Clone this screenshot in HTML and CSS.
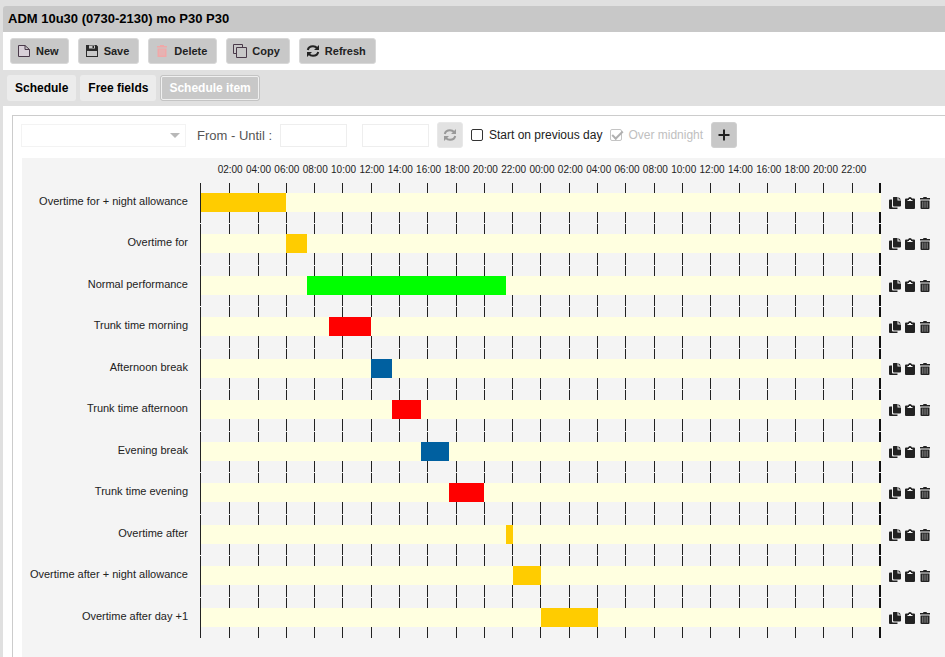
FILE: index.html
```html
<!DOCTYPE html>
<html lang="en">
<head>
    <meta charset="UTF-8">
    <meta name="viewport" content="width=device-width, initial-scale=1.0">
    <title>ADM 10u30 (0730-2130) mo P30 P30</title>
    <link rel="stylesheet" href="styles.css">
</head>
<body>
    <svg class="sprite" aria-hidden="true">
        <symbol id="icon-files" viewBox="0 0 12 12">
            <path fill="currentColor" d="M4.500 0H8.500V3.500H12V8.500Q12 9.500 11 9.500H5Q4 9.500 4 8.500V.5Q4 0 4.500 0ZM9.500 0L12 2.500H9.500ZM1 2.500H3V9.500Q3 10.500 4 10.500H8.500V11.500Q8.500 12 8 12H1Q0 12 0 11V3.500Q0 2.500 1 2.500Z"/>
        </symbol>
        <symbol id="icon-clipboard" viewBox="0 0 10 12">
            <path fill="currentColor" fill-rule="evenodd" d="M1 1.500H3Q3.500 0 5 0Q6.500 0 7 1.500H9Q10 1.500 10 2.500V11Q10 12 9 12H1Q0 12 0 11V2.500Q0 1.500 1 1.500ZM2.500 3V4H7.500V3H6V2H4V3Z"/>
        </symbol>
        <symbol id="icon-trash" viewBox="0 0 10 12">
            <path fill="currentColor" d="M0 1H3L3.500 0H6.500L7 1H10V2.500H0ZM.5 3.500H9.500V11Q9.500 12 8.500 12H1.500Q.5 12 .5 11Z"/>
            <path fill="none" stroke="#aaa" stroke-width=".8" d="M2.800 4.500V10.800M5 4.500V10.800M7.200 4.500V10.800"/>
        </symbol>
        <symbol id="icon-refresh" viewBox="0 0 14 14">
            <path fill="none" stroke="currentColor" stroke-width="2" d="M1.800 6Q2.500 2.200 7 2.200Q9.500 2.200 11.300 4.200M12.200 8Q11.500 11.800 7 11.800Q4.500 11.800 2.700 9.800"/>
            <path fill="currentColor" d="M13 1V6H8ZM1 13V8H6Z"/>
        </symbol>
    </svg>

    <div class="window">
        <h1 class="title">ADM 10u30 (0730-2130) mo P30 P30</h1>

        <div class="toolbar">
            <button type="button" class="btn">
                <svg class="icon" viewBox="0 0 14 14"><path fill="#d8d0d8" stroke="#4a3a4a" d="M1.500 1.500H8L12.500 5.500V12.500H1.500ZM8 1.500V5.500H12.500"/></svg>
                New
            </button>
            <button type="button" class="btn">
                <svg class="icon" viewBox="0 0 14 14"><path fill="#2a2a2a" fill-rule="evenodd" d="M1 1H11.500L13 2.500V13H1ZM2 7V12H12V7ZM4 1.500V4.500H10V1.500ZM7.500 2H9V4H7.500Z"/></svg>
                Save
            </button>
            <button type="button" class="btn">
                <svg class="icon" viewBox="0 0 14 14"><path fill="#f0a8a8" d="M2.500 4.500H11.500V13H2.500ZM2 2H5V1H9V2H12V3.500H2Z"/><path stroke="#dcbcbc" d="M5 5.500V11.500M7 5.500V11.500M9 5.500V11.500"/></svg>
                Delete
            </button>
            <button type="button" class="btn">
                <svg class="icon" viewBox="0 0 14 14"><path fill="none" stroke="#4a3a4a" d="M3.500 9.500H.5V.5H9.500V3.500M3.500 3.500H13.500V13.500H3.500Z"/></svg>
                Copy
            </button>
            <button type="button" class="btn">
                <svg class="icon"><use href="#icon-refresh"/></svg>
                Refresh
            </button>
        </div>

        <nav class="tabs">
            <a class="tab" href="#schedule">Schedule</a>
            <a class="tab" href="#free-fields">Free fields</a>
            <a class="tab active" href="#schedule-item">Schedule item</a>
        </nav>

        <main class="content">
            <div class="panel">
                <form class="filters">
                    <div class="combo">
                        <select aria-label="Type" disabled><option></option></select>
                        <svg class="combo-arrow" viewBox="0 0 10 5"><path fill="#b8b8b8" d="M0 0H10L5 5Z"/></svg>
                    </div>
                    <label class="range-label" for="from">From - Until :</label>
                    <input class="time" type="text" id="from" disabled>
                    <input class="time" type="text" id="until" aria-label="Until" disabled>
                    <button type="button" class="square-btn" aria-label="Reload" disabled><svg class="icon"><use href="#icon-refresh"/></svg></button>
                    <label class="check"><input type="checkbox">Start on previous day</label>
                    <label class="check check-disabled"><input type="checkbox" checked disabled>Over midnight</label>
                    <button type="button" class="square-btn" aria-label="Add"><svg class="icon" viewBox="0 0 14 14"><path stroke="#222" stroke-width="2" d="M7 1.500V12.500M1.500 7H12.500"/></svg></button>
                </form>

                <div class="chart">
                    <div class="hours" id="hours"></div>
                    <div class="rows" id="rows"></div>
                </div>
            </div>
        </main>
    </div>

    <script src="schedule.js"></script>
</body>
</html>
```
FILE: styles.css
```css
* {
    margin: 0;
    padding: 0;
    box-sizing: border-box;
}

body {
    font-family: 'Liberation Sans', Arial, sans-serif;
    font-size: 12px;
    background: #e0e0e0;
    color: #222;
    height: 100vh;
    overflow: hidden;
}

button,
input,
select {
    font: inherit;
    color: inherit;
}

.sprite {
    display: none;
}

.icon {
    width: 14px;
    height: 14px;
    flex-shrink: 0;
}

.window {
    height: 100%;
    padding: 6px 0 0 3px;
    display: flex;
    flex-direction: column;
}

.title {
    height: 26px;
    padding-left: 5px;
    line-height: 26px;
    font-size: 13px;
    color: #000;
    background: #c8c8c8;
    border-top-left-radius: 3px;
}

.toolbar {
    display: flex;
    gap: 9px;
    padding: 6px 7px;
    background: #fff;
}

.btn {
    display: flex;
    align-items: center;
    gap: 5px;
    height: 26px;
    padding: 0 9px 0 6px;
    font-size: 11px;
    font-weight: bold;
    background: #c8c8c8;
    border: 1px solid #d8d8d8;
    border-radius: 3px;
}

.tabs {
    display: flex;
    align-items: center;
    gap: 4px;
    height: 36px;
    padding-left: 4px;
}

.tab {
    height: 26px;
    padding: 0 8px;
    line-height: 26px;
    font-weight: bold;
    color: #000;
    text-decoration: none;
    background: #ececec;
    border-radius: 3px;
}

.tab.active {
    line-height: 24px;
    color: #fff;
    background: #c8c8c8;
    border: 1px solid #c4c4c4;
    outline: 1px solid #f0f0f0;
    outline-offset: -2px;
}

.content {
    flex: 1;
    min-height: 0;
    padding: 9px 0 0 9px;
    background: #fff;
}

.panel {
    height: 100%;
    display: flex;
    flex-direction: column;
    border: 1px solid #ccc;
    border-width: 1px 0 0 1px;
}

.filters {
    display: flex;
    align-items: center;
    padding: 6px 8px 10px;
}

.combo {
    position: relative;
    width: 165px;
}

.combo select,
.time {
    width: 100%;
    height: 23px;
    appearance: none;
    background: #fff;
    border: 1px solid #eee;
}

.combo-arrow {
    position: absolute;
    top: 9px;
    right: 6px;
    width: 10px;
    height: 5px;
    pointer-events: none;
}

.range-label {
    width: 83px;
    margin-left: 11px;
    font-size: 13px;
    white-space: nowrap;
    color: #555;
}

.time {
    width: 67px;
    margin-right: 15px;
}

.time + .time {
    margin-right: 8px;
}

.square-btn {
    display: flex;
    align-items: center;
    justify-content: center;
    width: 26px;
    height: 26px;
    background: #c8c8c8;
    border: 1px solid #d0d0d0;
    border-radius: 3px;
}

.square-btn:disabled {
    color: #999;
    background: #e2e2e2;
    border-color: #e8e8e8;
}

.check {
    display: flex;
    align-items: center;
    gap: 6px;
    margin: 0 8px;
}

.check input {
    width: 12px;
    height: 12px;
    appearance: none;
    border: 1px solid #333;
    border-radius: 2px;
}

.check-disabled {
    margin-left: 0;
    color: #c0c0c0;
}

.check-disabled input {
    border-color: #c4c4c4;
}

/* tick mark */
.check input:checked::before {
    content: '';
    display: block;
    width: 9px;
    height: 4px;
    margin: 1px 0 0 1px;
    border: 2px solid #b0b0b0;
    border-width: 0 0 2px 2px;
    transform: rotate(-45deg);
}

.chart {
    flex: 1;
    min-height: 0;
    display: flex;
    flex-direction: column;
    margin-left: 9px;
    padding-bottom: 18px;
    background: #f4f4f4;
}

.hours {
    display: grid;
    grid-template-columns: repeat(23, 1fr);
    height: 25px;
    margin: 0 77px 0 194px;
    line-height: 23px;
    font-size: 10px;
    text-align: center;
    white-space: nowrap;
}

.rows {
    flex: 1;
    display: grid;
    grid-auto-rows: 1fr;
}

.row {
    display: grid;
    grid-template-columns: 178px 1fr 65px;
}

.row-label {
    padding-right: 12px;
    line-height: 36px;
    font-size: 11px;
    text-align: right;
    white-space: nowrap;
}

.track {
    display: grid;
    grid-template: 10px 19px 1fr / 100%;
    margin-bottom: 1px;
    border-left: 1px solid #222;
}

.ticks {
    grid-area: 1 / 1 / 4 / 2;
    display: grid;
    grid-template-columns: repeat(24, 1fr);
}

.tick {
    margin-right: -1px;
    border-right: 1px solid #222;
}

.tick:last-child {
    border-right: 2px solid #111;
}

.lane {
    grid-area: 2 / 1 / 3 / 2;
    display: flex;
    margin-right: -1px;
    z-index: 1;
    background: #ffffe0;
}

.bar {
    height: 100%;
}

.bar.overtime { background: #ffcc00; }
.bar.normal { background: #00ff00; }
.bar.trunk { background: #ff0000; }
.bar.break { background: #0060a0; }

.actions {
    display: flex;
    gap: 3px;
    height: 40px;
    padding-left: 9px;
    align-items: center;
}

.actions button {
    display: flex;
    background: none;
    border: none;
}

.actions svg {
    width: 12px;
    height: 12px;
}
```
FILE: schedule.js
```js
// start and end are in hours from midnight of the first day
const HOURS = 48;

const items = [
    { label: 'Overtime for + night allowance', type: 'overtime', start: 0, end: 6 },
    { label: 'Overtime for', type: 'overtime', start: 6, end: 7.5 },
    { label: 'Normal performance', type: 'normal', start: 7.5, end: 21.5 },
    { label: 'Trunk time morning', type: 'trunk', start: 9, end: 12 },
    { label: 'Afternoon break', type: 'break', start: 12, end: 13.5 },
    { label: 'Trunk time afternoon', type: 'trunk', start: 13.5, end: 15.5 },
    { label: 'Evening break', type: 'break', start: 15.5, end: 17.5 },
    { label: 'Trunk time evening', type: 'trunk', start: 17.5, end: 20 },
    { label: 'Overtime after', type: 'overtime', start: 21.5, end: 22 },
    { label: 'Overtime after + night allowance', type: 'overtime', start: 22, end: 24 },
    { label: 'Overtime after day +1', type: 'overtime', start: 24, end: 28 }
];

const percent = hours => (hours / HOURS * 100) + '%';

let hours = '';
for (let h = 2; h < HOURS; h += 2) {
    hours += `<span>${String(h % 24).padStart(2, '0')}:00</span>`;
}
document.getElementById('hours').innerHTML = hours;

const ticks = '<span class="tick"></span>'.repeat(HOURS / 2);

document.getElementById('rows').innerHTML = items.map(item => `
    <div class="row">
        <div class="row-label">${item.label}</div>
        <div class="track">
            <div class="ticks">${ticks}</div>
            <div class="lane">
                <div class="bar ${item.type}" style="margin-left: ${percent(item.start)}; width: ${percent(item.end - item.start)}"></div>
            </div>
        </div>
        <div class="actions">
            <button type="button" aria-label="Copy"><svg><use href="#icon-files"/></svg></button>
            <button type="button" aria-label="Paste"><svg><use href="#icon-clipboard"/></svg></button>
            <button type="button" aria-label="Delete"><svg><use href="#icon-trash"/></svg></button>
        </div>
    </div>`).join('');
```
